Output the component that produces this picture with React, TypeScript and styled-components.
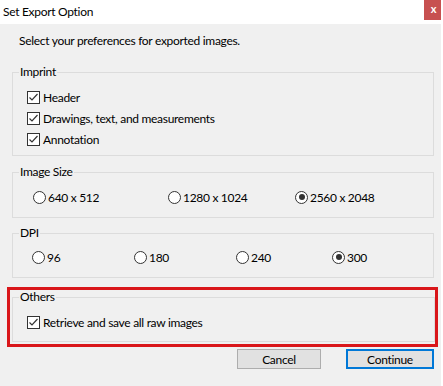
import React from "react";
import styled, { createGlobalStyle } from "styled-components";

const GlobalStyle = createGlobalStyle`
  html, body {
    margin: 0;
    padding: 0;
    background: #f0f0f0;
  }
  body {
    font-family: Lato, "Noto Sans", sans-serif;
    font-size: 12px;
    letter-spacing: -0.3px;
    color: #000;
  }
`;

const Window = styled.div`
  width: 443px;
  height: 386px;
  box-sizing: border-box;
  border-right: 2px solid #fff;
  background: #f0f0f0;
  display: flex;
  flex-direction: column;
  overflow: hidden;
`;

const TitleBar = styled.div`
  height: 24px;
  margin-right: -2px;
  background: #fff;
  display: flex;
  align-items: flex-start;
  justify-content: space-between;
`;

const Title = styled.div`
  padding: 5px 0 0 3px;
  line-height: 14px;
  font-size: 12px;
`;

const CloseButton = styled.div`
  width: 19px;
  height: 20px;
  background: #c75050;
  color: #fff;
  font-weight: bold;
  font-size: 11px;
  letter-spacing: 0;
  line-height: 18px;
  text-align: center;
`;

const Body = styled.div`
  padding: 10px 7px 0 12px;
  display: flex;
  flex-direction: column;
`;

const Intro = styled.div`
  line-height: 14px;
  padding-left: 7px;
  margin-bottom: 24px;
`;

const Group = styled.div<{ $pt: number; $pb: number; $mb?: number }>`
  position: relative;
  border: 1px solid #dcdcdc;
  padding: ${({ $pt }) => $pt}px 0 ${({ $pb }) => $pb}px 0;
  margin-bottom: ${({ $mb }) => $mb ?? 0}px;
`;

const Legend = styled.span`
  position: absolute;
  top: -8px;
  left: 6px;
  padding: 0 1px;
  line-height: 14px;
  background: #f0f0f0;
`;

const CheckRow = styled.label`
  display: flex;
  align-items: center;
  height: 21px;
  padding-left: 14px;
  gap: 3px;
`;

const Box = styled.span`
  width: 13px;
  height: 13px;
  box-sizing: border-box;
  border: 1px solid #333;
  background: #fff;
  display: flex;
  align-items: center;
  justify-content: center;
`;

const RadioRow = styled.div<{ $cols: string; $pl: number }>`
  display: grid;
  grid-template-columns: ${({ $cols }) => $cols};
  height: 20px;
  align-items: center;
  padding-left: ${({ $pl }) => $pl}px;
`;

const RadioItem = styled.label`
  display: flex;
  align-items: center;
  gap: 2px;
`;

const Circle = styled.span<{ $on?: boolean }>`
  width: 13px;
  height: 13px;
  box-sizing: border-box;
  border-radius: 50%;
  border: 1px solid #333;
  background: #fff;
  display: flex;
  align-items: center;
  justify-content: center;
  &::after {
    content: "";
    width: 6px;
    height: 6px;
    border-radius: 50%;
    background: ${({ $on }) => ($on ? "#333" : "transparent")};
  }
`;

const Highlight = styled.div`
  border: 3px solid #d9161a;
  margin: 0 -4px 0 -5px;
  padding: 7px 0 2px 2px;
`;

const Buttons = styled.div`
  display: flex;
  justify-content: flex-end;
  gap: 25px;
  margin-top: 2px;
`;

const Button = styled.div<{ $w: number; $primary?: boolean }>`
  width: ${({ $w }) => $w}px;
  height: 20px;
  box-sizing: border-box;
  border: ${({ $primary }) => ($primary ? "2px solid #0078d7" : "1px solid #adadad")};
  background: #e1e1e1;
  display: flex;
  align-items: center;
  justify-content: center;
`;

const Check = ({ label }: { label: string }) => (
  <CheckRow>
    <Box>
      <svg width="11" height="11" viewBox="0 0 11 11">
        <polyline points="1.5,5.5 4,8 9.5,2" fill="none" stroke="#333" strokeWidth="1.2" />
      </svg>
    </Box>
    {label}
  </CheckRow>
);

const Radio = ({ label, on }: { label: string; on?: boolean }) => (
  <RadioItem>
    <Circle $on={on} />
    {label}
  </RadioItem>
);

export default function App() {
  return (
    <Window>
      <GlobalStyle />
      <TitleBar>
        <Title>Set Export Option</Title>
        <CloseButton>x</CloseButton>
      </TitleBar>
      <Body>
        <Intro>Select your preferences for exported images.</Intro>
        <Group $pt={14} $pb={5} $mb={16}>
          <Legend>Imprint</Legend>
          <Check label="Header" />
          <Check label="Drawings, text, and measurements" />
          <Check label="Annotation" />
        </Group>
        <Group $pt={14} $pb={10} $mb={15}>
          <Legend>Image Size</Legend>
          <RadioRow $cols="135px 127px auto" $pl={20}>
            <Radio label="640 x 512" />
            <Radio label="1280 x 1024" />
            <Radio label="2560 x 2048" on />
          </RadioRow>
        </Group>
        <Group $pt={13} $pb={10} $mb={9}>
          <Legend>DPI</Legend>
          <RadioRow $cols="102px 102px 96px auto" $pl={19}>
            <Radio label="96" />
            <Radio label="180" />
            <Radio label="240" />
            <Radio label="300" on />
          </RadioRow>
        </Group>
        <Highlight>
          <Group $pt={14} $pb={8}>
            <Legend>Others</Legend>
            <Check label="Retrieve and save all raw images" />
          </Group>
        </Highlight>
        <Buttons>
          <Button $w={84}>Cancel</Button>
          <Button $w={88} $primary>Continue</Button>
        </Buttons>
      </Body>
    </Window>
  );
}
